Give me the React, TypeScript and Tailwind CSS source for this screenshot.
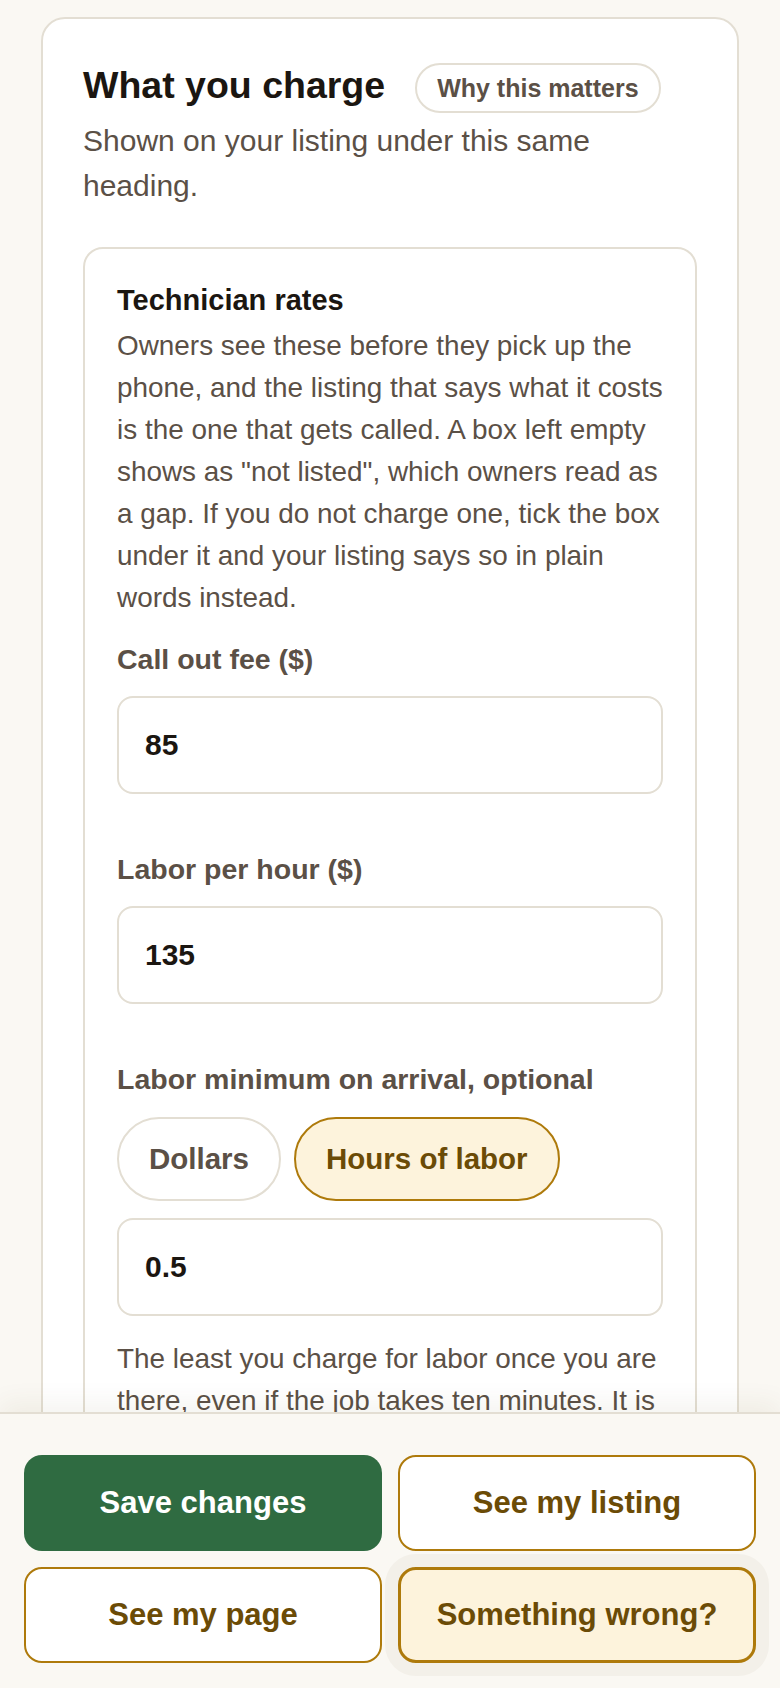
import React from 'react';

type FieldProps = {
  label: string;
  value: string;
  className?: string;
};

// one labelled number box
function Field({ label, value, className }: FieldProps) {
  return (
    <div className={className}>
      <label className="block text-[28.5px] font-bold leading-[40px] text-[#5b5046]">{label}</label>
      <input
        readOnly
        value={value}
        className="mt-[17px] block h-[98px] w-full rounded-[16px] border-2 border-[#e3ded3] bg-white px-[26px] text-[30px] font-bold text-[#1b1611] outline-none"
      />
    </div>
  );
}

export default function App() {
  return (
    <div className="flex h-screen flex-col bg-[#faf8f3] font-['Liberation_Sans',Arial,sans-serif]">
      {/* Scrolling content */}
      <main className="min-h-0 flex-1 overflow-hidden px-[41px] pt-[17px]">
        <section className="rounded-[24px] border-2 border-[#e3ded3] bg-white px-[40px] pt-[44px] pb-[40px]">
          <div className="flex items-center gap-[30px]">
            <h2 className="mb-[5px] text-[37.5px] font-bold leading-[45px] text-[#1b1611]">What you charge</h2>
            <button className="h-[50px] rounded-full border-2 border-[#e3ded3] bg-white px-[20px] text-[25px] font-bold leading-[30px] text-[#5b5046]">
              Why this matters
            </button>
          </div>
          <p className="mt-[5px] max-w-[590px] text-[30px] leading-[45px] text-[#5b5046]">
            Shown on your listing under this same heading.
          </p>

          {/* Technician rates */}
          <div className="mt-[39px] rounded-[20px] border-2 border-[#e3ded3] bg-white px-[32px] pt-[32px] pb-[40px]">
            <h3 className="text-[29px] font-bold leading-[38px] text-[#1b1611]">Technician rates</h3>
            <p className="mt-[6px] text-[27.9px] leading-[42px] text-[#5b5046]">
              Owners see these before they pick up the phone, and the listing that says what it costs is the one
              that gets called. A box left empty shows as "not listed", which owners read as a gap. If you do not
              charge one, tick the box under it and your listing says so in plain words instead.
            </p>

            <Field className="mt-[20px]" label="Call out fee ($)" value="85" />
            <Field className="mt-[55px]" label="Labor per hour ($)" value="135" />

            <div className="mt-[55px]">
              <label className="block text-[28.5px] font-bold leading-[40px] text-[#5b5046]">
                Labor minimum on arrival, optional
              </label>
              <div className="mt-[18px] flex gap-[13px]">
                <button className="h-[84px] rounded-full border-2 border-[#e3ded3] bg-white px-[30px] text-[29.5px] font-bold text-[#5b5046]">
                  Dollars
                </button>
                <button className="h-[84px] rounded-full border-2 border-[#ae7a0b] bg-[#fdf3dc] px-[30px] text-[29.5px] font-bold text-[#6b4b06]">
                  Hours of labor
                </button>
              </div>
              <input
                readOnly
                value="0.5"
                className="mt-[17px] block h-[98px] w-full rounded-[16px] border-2 border-[#e3ded3] bg-white px-[26px] text-[30px] font-bold text-[#1b1611] outline-none"
              />
              <p className="mt-[22px] text-[27.9px] leading-[42px] text-[#5b5046]">
                The least you charge for labor once you are there, even if the job takes ten minutes. It is shown on
                your listing next to your hourly rate.
              </p>
            </div>
          </div>
        </section>
      </main>

      {/* Sticky action bar */}
      <footer className="relative z-10 grid shrink-0 grid-cols-2 gap-[16px] border-t-2 border-[#e3ded3] bg-[#faf8f3] px-[24px] pt-[41px] pb-[25px] shadow-[0_-10px_24px_rgba(80,60,20,0.06)]">
        <button className="h-[96px] rounded-[18px] bg-[#2f6b41] text-[31px] font-bold text-white">Save changes</button>
        <button className="h-[96px] rounded-[18px] border-2 border-[#ae7a0b] bg-white text-[31px] font-bold text-[#6b4b06]">
          See my listing
        </button>
        <button className="h-[96px] rounded-[18px] border-2 border-[#ae7a0b] bg-white text-[31px] font-bold text-[#6b4b06]">
          See my page
        </button>
        <button className="h-[96px] rounded-[18px] border-[3px] border-[#ae7a0b] bg-[#fdf3dc] text-[31px] font-bold text-[#6b4b06] shadow-[0_0_0_13px_#f3f0e9]">
          Something wrong?
        </button>
      </footer>
    </div>
  );
}
